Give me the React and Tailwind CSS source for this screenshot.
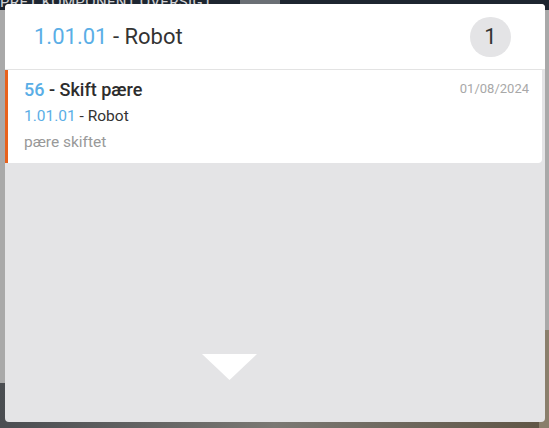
export default function App() {
  return (
    <div className="relative w-[549px] h-[428px] overflow-hidden bg-[#a9a9a9] font-['Roboto',sans-serif]">
      {/* background page behind the overlay */}
      <div className="absolute left-0 top-0 w-full h-[10px] bg-[#1d2530]">
        <div className="absolute left-0 top-[-9px] text-[15px] tracking-wide text-white/80 whitespace-nowrap">PRET KOMPONENT OVERSIGT</div>
        <div className="absolute left-[240px] top-0 w-[40px] h-[10px] bg-[#6b6f75]" />
      </div>
      <div className="absolute left-0 bottom-0 w-full h-[45px] bg-gradient-to-r from-[#4a4d51] via-[#7a7873] to-[#5f5545]" />
      <div className="absolute right-0 top-[330px] w-[10px] h-[98px] bg-[#8a7f6c]" />

      <div className="relative pt-[4px] pl-[5px]">
        <div className="w-[540px] h-[418px] rounded-[4px] bg-[#e4e4e6] overflow-hidden flex flex-col">
          <div className="h-[66px] shrink-0 bg-white border-b border-[#e3e3e3] flex items-center justify-between pl-[29px] pr-[34px]">
            <div className="text-[22px] leading-none text-[#333333]">
              <span className="text-[#5aaee6]">1.01.01</span> - Robot
            </div>
            <div className="w-[41px] h-[40px] rounded-full bg-[#e4e4e6] flex items-center justify-center text-[22px] text-[#333333]">1</div>
          </div>

          <div className="h-[93px] shrink-0 mr-[3px] bg-white border-l-[3px] border-[#e8621c] rounded-br-[4px] pl-[16px] pr-[13px] pt-[8px] flex justify-between">
            <div className="flex flex-col">
              <div className="text-[18px] leading-[24px] font-medium text-[#2d2d2d]">
                <span className="text-[#5aaee6]">56</span> - Skift pære
              </div>
              <div className="mt-[3px] text-[15.5px] leading-[22px] text-[#333333]">
                <span className="text-[#5aaee6]">1.01.01</span> - Robot
              </div>
              <div className="mt-[4px] text-[15.5px] leading-[22px] text-[#999999]">pære skiftet</div>
            </div>
            <div className="text-[13px] leading-[22px] text-[#a8a8a8]">01/08/2024</div>
          </div>

          <div className="flex-1">
            <svg className="ml-[197px] mt-[191px]" width="55" height="26" viewBox="0 0 55 26">
              <polygon points="0,0 55,0 27.5,26" fill="#ffffff" />
            </svg>
          </div>
        </div>
      </div>
    </div>
  );
}
